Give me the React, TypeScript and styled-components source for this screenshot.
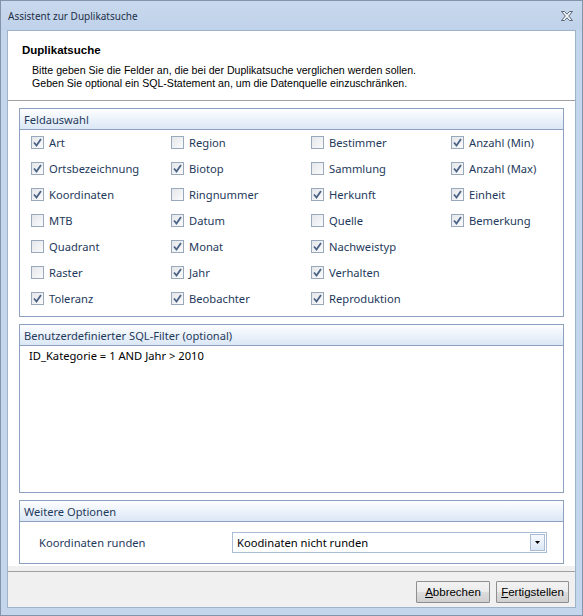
import styled, { createGlobalStyle } from "styled-components"

const GlobalStyle = createGlobalStyle`
  html, body {
    margin: 0;
    padding: 0;
    background: #ffffff;
  }
  * {
    box-sizing: border-box;
  }
`

const Window = styled.div`
  width: 583px;
  height: 616px;
  border: 1px solid #8393aa;
  background: #c4d6ec;
  display: flex;
  flex-direction: column;
  font-family: "Noto Sans", "Liberation Sans", sans-serif;
`

const TitleBar = styled.div`
  height: 29px;
  display: flex;
  align-items: center;
  justify-content: space-between;
  padding: 0 8px 0 7px;
  background: linear-gradient(#c9d9ed, #bfd2ea);
  color: #1e2f48;
  font-size: 10px;
`

const Client = styled.div`
  flex: 1;
  margin: 0 6px 7px 6px;
  border: 1px solid #9fb2cc;
  background: #ffffff;
  display: flex;
  flex-direction: column;
`

const Header = styled.div`
  height: 70px;
  padding: 13px 14px 0;
  border-bottom: 1px solid #a0a0a0;
  font-family: "Liberation Sans", sans-serif;
  font-size: 10.6px;
  color: #000;
`

const HeaderTitle = styled.div`
  font-weight: bold;
  font-size: 11.5px;
  margin-bottom: 8px;
`

const HeaderText = styled.div`
  padding-left: 10px;
  line-height: 13px;
`

const Content = styled.div`
  flex: 1;
  padding: 7px 11px 2px 11px;
  display: flex;
  flex-direction: column;
  gap: 7px;
`

const Group = styled.div<{ $height?: number; $grow?: boolean }>`
  border: 1px solid #8ea2c0;
  display: flex;
  flex-direction: column;
  ${(p) => (p.$height ? `height: ${p.$height}px;` : "")}
  ${(p) => (p.$grow ? "flex: 1;" : "")}
`

const GroupHeader = styled.div`
  height: 21px;
  display: flex;
  align-items: center;
  padding-left: 4px;
  border-bottom: 1px solid #8ea2c0;
  background: linear-gradient(#fdfeff, #dbe7f5);
  color: #1e395b;
  font-size: 11.1px;
`

const FieldGrid = styled.div`
  display: grid;
  grid-template-columns: repeat(4, 140px);
  grid-template-rows: repeat(7, 26px);
  grid-auto-flow: column;
  padding: 0 0 4px 11px;
`

const Field = styled.label`
  display: flex;
  align-items: center;
  gap: 5px;
  padding-bottom: 2px;
  color: #1e395b;
  font-size: 11.2px;
`

const Box = styled.span`
  width: 13px;
  height: 13px;
  border: 1px solid #9aa8bb;
  background: linear-gradient(135deg, #e3e6ea, #fbfbfc);
  display: flex;
  align-items: center;
  justify-content: center;
  flex-shrink: 0;
`

const SqlArea = styled.div`
  flex: 1;
  padding: 2px 9px;
  color: #000;
  font-size: 11.2px;
`

const OptionRow = styled.div`
  height: 41px;
  display: flex;
  align-items: center;
  padding: 0 16px 0 19px;
  color: #1e395b;
  font-size: 11.2px;
`

const OptionLabel = styled.span`
  width: 193px;
`

const Combo = styled.div`
  flex: 1;
  height: 21px;
  border: 1px solid #abbdd6;
  display: flex;
  align-items: center;
  justify-content: space-between;
  padding: 0 1px 0 4px;
  color: #000;
  font-size: 11.2px;
`

const ComboButton = styled.span`
  width: 15px;
  height: 17px;
  border: 1px solid #a9bbd3;
  background: linear-gradient(#f5f9fe, #dce7f5);
  display: flex;
  align-items: center;
  justify-content: center;
`

const Footer = styled.div`
  height: 41px;
  background: #f0f0f0;
  border-top: 5px solid #f0f0f0;
  box-shadow: inset 0 1px 0 #a0a0a0;
  display: flex;
  justify-content: flex-end;
  align-items: flex-end;
  gap: 6px;
  padding: 0 6px 4px 0;
`

const Button = styled.button<{ $width: number }>`
  width: ${(p) => p.$width}px;
  height: 22px;
  border: 1px solid #8f8f8f;
  border-radius: 1px;
  background: linear-gradient(#f3f3f3 0%, #ebebeb 50%, #dddddd 51%, #cfcfcf 100%);
  font-family: "Liberation Sans", sans-serif;
  font-size: 11.5px;
  color: #000;
  padding: 0;
  u {
    text-decoration: underline;
  }
`

const Check = () => (
  <svg width="9" height="9" viewBox="0 0 9 9">
    <path d="M1 4.5 L3.5 7.5 L8 1" stroke="#4b6386" strokeWidth="1.8" fill="none" />
  </svg>
)

const CloseIcon = () => (
  <svg width="14" height="12" viewBox="0 0 14 12">
    <path
      d="M1.5 1.5 H4.5 L7 4.2 L9.5 1.5 H12.5 L8.7 6 L12.5 10.5 H9.5 L7 7.8 L4.5 10.5 H1.5 L5.3 6 Z"
      fill="#f4f6f9"
      stroke="#59667a"
      strokeWidth="1"
      strokeLinejoin="round"
    />
  </svg>
)

const columns: [string, boolean][][] = [
  [["Art", true], ["Ortsbezeichnung", true], ["Koordinaten", true], ["MTB", false], ["Quadrant", false], ["Raster", false], ["Toleranz", true]],
  [["Region", false], ["Biotop", true], ["Ringnummer", false], ["Datum", true], ["Monat", true], ["Jahr", true], ["Beobachter", true]],
  [["Bestimmer", false], ["Sammlung", false], ["Herkunft", true], ["Quelle", false], ["Nachweistyp", true], ["Verhalten", true], ["Reproduktion", true]],
  [["Anzahl (Min)", true], ["Anzahl (Max)", true], ["Einheit", true], ["Bemerkung", true]],
]

const App = () => {
  return (
    <>
      <GlobalStyle />
      <Window>
        <TitleBar>
          <span>Assistent zur Duplikatsuche</span>
          <CloseIcon />
        </TitleBar>
        <Client>
          <Header>
            <HeaderTitle>Duplikatsuche</HeaderTitle>
            <HeaderText>
              Bitte geben Sie die Felder an, die bei der Duplikatsuche verglichen werden sollen.
              <br />
              Geben Sie optional ein SQL-Statement an, um die Datenquelle einzuschränken.
            </HeaderText>
          </Header>
          <Content>
            <Group $height={209}>
              <GroupHeader>Feldauswahl</GroupHeader>
              <FieldGrid>
                {columns.map((col, ci) =>
                  Array.from({ length: 7 }).map((_, ri) => {
                    const f = col[ri]
                    if (!f) return <span key={`${ci}-${ri}`} />
                    return (
                      <Field key={f[0]}>
                        <Box>{f[1] && <Check />}</Box>
                        {f[0]}
                      </Field>
                    )
                  })
                )}
              </FieldGrid>
            </Group>
            <Group $grow>
              <GroupHeader>Benutzerdefinierter SQL-Filter (optional)</GroupHeader>
              <SqlArea>ID_Kategorie = 1 AND Jahr &gt; 2010</SqlArea>
            </Group>
            <Group>
              <GroupHeader>Weitere Optionen</GroupHeader>
              <OptionRow>
                <OptionLabel>Koordinaten runden</OptionLabel>
                <Combo>
                  <span>Koodinaten nicht runden</span>
                  <ComboButton>
                    <svg width="5" height="3" viewBox="0 0 5 3">
                      <path d="M0 0 H5 L2.5 3 Z" fill="#000" />
                    </svg>
                  </ComboButton>
                </Combo>
              </OptionRow>
            </Group>
          </Content>
          <Footer>
            <Button $width={74}>
              <u>A</u>bbrechen
            </Button>
            <Button $width={73}>
              <u>F</u>ertigstellen
            </Button>
          </Footer>
        </Client>
      </Window>
    </>
  )
}

export default App
